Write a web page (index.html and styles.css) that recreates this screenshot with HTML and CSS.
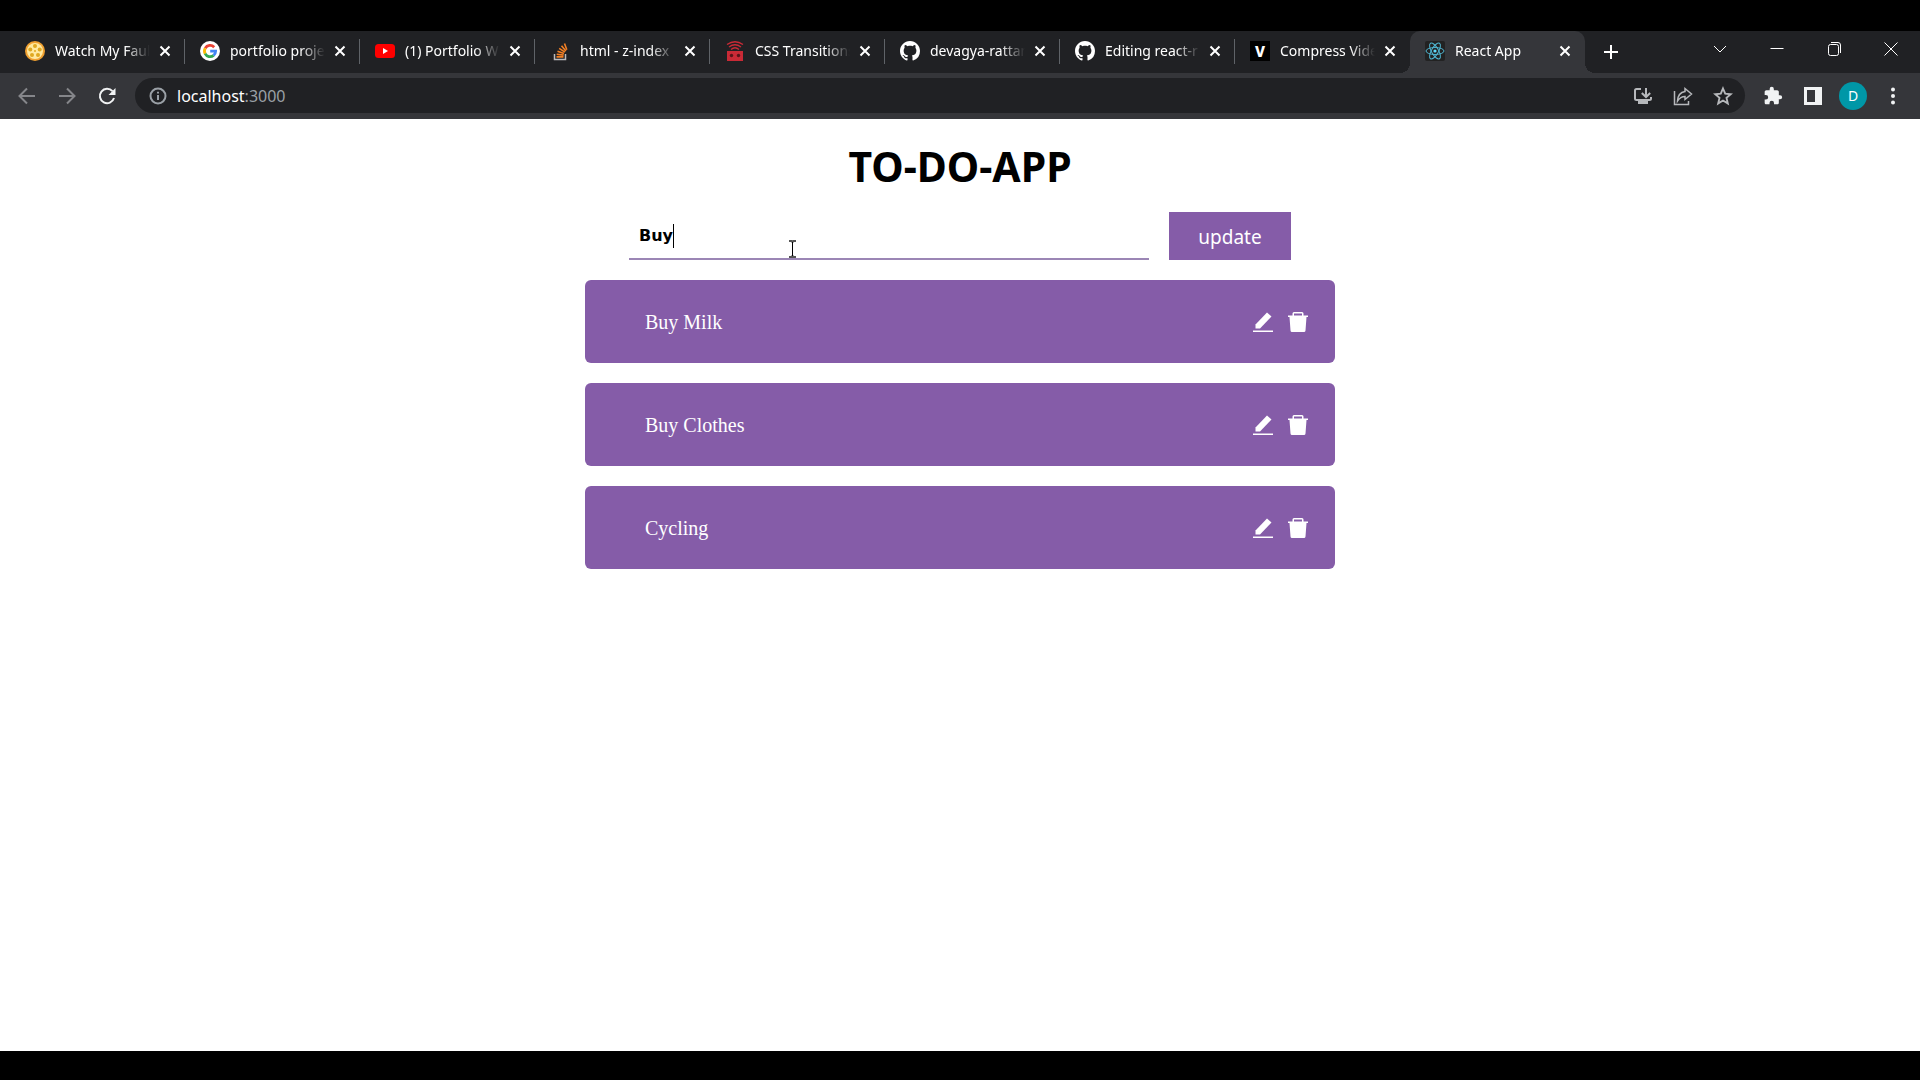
FILE: index.html
```html
<!DOCTYPE html>
<html lang="en">
<head>
<meta charset="utf-8">
<title>React App</title>
<link rel="stylesheet" href="styles.css">
</head>
<body>
<div class="screen">
  <header class="tab-strip">
    <div class="tabs">
      <div class="tab">
        <svg class="favicon" viewBox="0 0 20 20"><circle cx="10" cy="10" r="10" fill="#f0a030"/><circle cx="10" cy="10" r="8" fill="#ffe9a0"/><g fill="#e0a820"><circle cx="10" cy="5" r="2"/><circle cx="14.700" cy="8.500" r="2"/><circle cx="13" cy="14" r="2"/><circle cx="7" cy="14" r="2"/><circle cx="5.300" cy="8.500" r="2"/><circle cx="10" cy="10" r="1"/></g></svg>
        <span class="tab-title">Watch My Faul</span>
        <button class="tab-close" aria-label="Close tab"><svg viewBox="0 0 16 16"><path d="M3.500 3.500l9 9M12.500 3.500l-9 9"/></svg></button>
      </div>
      <div class="tab">
        <svg class="favicon" viewBox="0 0 20 20"><circle cx="10" cy="10" r="10" fill="#fff"/><g fill="none" stroke-width="2.800"><path d="M14.200 6.200A5.600 5.600 0 0 0 5.200 7.300" stroke="#ea4335"/><path d="M5.200 7.200a5.800 5.800 0 0 0 0 5.600" stroke="#fbbc05"/><path d="M5.100 12.600a5.600 5.600 0 0 0 8.500 1.800" stroke="#34a853"/><path d="M13.600 14.400a5.600 5.600 0 0 0 2-4.200H10.200" stroke="#4285f4"/></g></svg>
        <span class="tab-title">portfolio proje</span>
        <button class="tab-close" aria-label="Close tab"><svg viewBox="0 0 16 16"><path d="M3.500 3.500l9 9M12.500 3.500l-9 9"/></svg></button>
      </div>
      <div class="tab">
        <svg class="favicon" viewBox="0 0 20 20"><rect y="3" width="20" height="14" rx="3.500" fill="#f00"/><path d="M8 7l5 3-5 3z" fill="#fff"/></svg>
        <span class="tab-title">(1) Portfolio W</span>
        <button class="tab-close" aria-label="Close tab"><svg viewBox="0 0 16 16"><path d="M3.500 3.500l9 9M12.500 3.500l-9 9"/></svg></button>
      </div>
      <div class="tab">
        <svg class="favicon" viewBox="0 0 20 20" fill="none"><path d="M4.500 13v5.500h11V13" stroke="#bcbbbb" stroke-width="1.500"/><g stroke="#f48024" stroke-width="1.600"><path d="M6.500 15.900h7M6.700 13.200l6.900.9M7.500 10.200l6.500 2.400M9.200 7.300l5.700 3.900M11.500 4.700l4.400 5.400M14.500 2.500l2.300 6.200"/></g></svg>
        <span class="tab-title">html - z-index</span>
        <button class="tab-close" aria-label="Close tab"><svg viewBox="0 0 16 16"><path d="M3.500 3.500l9 9M12.500 3.500l-9 9"/></svg></button>
      </div>
      <div class="tab">
        <svg class="favicon" viewBox="0 0 20 20"><path d="M2 10h16v10H2z" fill="#c92a36"/><g fill="none" stroke="#c92a36" stroke-width="1.300"><path d="M2 3.500Q10-2 18 3.500M4 6Q10 1.500 16 6M6 8.500Q10 5 14 8.500"/></g><circle cx="6.500" cy="14.500" r="1.700" fill="#571419"/><circle cx="13.500" cy="14.500" r="1.700" fill="#571419"/></svg>
        <span class="tab-title">CSS Transitions</span>
        <button class="tab-close" aria-label="Close tab"><svg viewBox="0 0 16 16"><path d="M3.500 3.500l9 9M12.500 3.500l-9 9"/></svg></button>
      </div>
      <div class="tab">
        <svg class="favicon" viewBox="0 0 16 16"><path fill="#fff" d="M8 0C3.580 0 0 3.580 0 8c0 3.540 2.290 6.530 5.470 7.590.4.070.55-.17.55-.38 0-.19-.01-.82-.01-1.490-2.010.37-2.530-.49-2.690-.94-.09-.23-.48-.94-.82-1.130-.28-.15-.68-.52-.01-.53.63-.01 1.080.58 1.230.82.72 1.210 1.870.87 2.330.66.070-.52.28-.87.51-1.070-1.780-.2-3.640-.89-3.640-3.950 0-.87.31-1.590.82-2.150-.08-.2-.36-1.020.08-2.120 0 0 .67-.21 2.200.82.64-.18 1.320-.27 2-.27s1.360.09 2 .27c1.530-1.040 2.200-.82 2.200-.82.44 1.100.16 1.920.08 2.120.51.56.82 1.270.82 2.150 0 3.070-1.870 3.750-3.650 3.950.29.25.54.73.54 1.480 0 1.070-.01 1.930-.01 2.200 0 .21.15.46.55.38A8.010 8.010 0 0 0 16 8c0-4.420-3.580-8-8-8z"/></svg>
        <span class="tab-title">devagya-rattan</span>
        <button class="tab-close" aria-label="Close tab"><svg viewBox="0 0 16 16"><path d="M3.500 3.500l9 9M12.500 3.500l-9 9"/></svg></button>
      </div>
      <div class="tab">
        <svg class="favicon" viewBox="0 0 16 16"><path fill="#fff" d="M8 0C3.580 0 0 3.580 0 8c0 3.540 2.290 6.530 5.470 7.590.4.070.55-.17.55-.38 0-.19-.01-.82-.01-1.490-2.010.37-2.530-.49-2.690-.94-.09-.23-.48-.94-.82-1.130-.28-.15-.68-.52-.01-.53.63-.01 1.080.58 1.230.82.72 1.210 1.870.87 2.330.66.070-.52.28-.87.51-1.070-1.780-.2-3.640-.89-3.640-3.950 0-.87.31-1.590.82-2.150-.08-.2-.36-1.020.08-2.120 0 0 .67-.21 2.200.82.64-.18 1.320-.27 2-.27s1.360.09 2 .27c1.530-1.040 2.200-.82 2.200-.82.44 1.100.16 1.920.08 2.120.51.56.82 1.270.82 2.150 0 3.070-1.870 3.750-3.650 3.950.29.25.54.73.54 1.480 0 1.070-.01 1.930-.01 2.200 0 .21.15.46.55.38A8.010 8.010 0 0 0 16 8c0-4.420-3.580-8-8-8z"/></svg>
        <span class="tab-title">Editing react-r</span>
        <button class="tab-close" aria-label="Close tab"><svg viewBox="0 0 16 16"><path d="M3.500 3.500l9 9M12.500 3.500l-9 9"/></svg></button>
      </div>
      <div class="tab last">
        <span class="favicon letter-icon">V</span>
        <span class="tab-title">Compress Vide</span>
        <button class="tab-close" aria-label="Close tab"><svg viewBox="0 0 16 16"><path d="M3.500 3.500l9 9M12.500 3.500l-9 9"/></svg></button>
      </div>
      <div class="tab active">
        <svg class="favicon" viewBox="0 0 20 20"><rect width="20" height="20" rx="2" fill="#222"/><circle cx="10" cy="10" r="1.600" fill="#61dafb"/><g fill="none" stroke="#4fb4d0" stroke-width="1"><ellipse cx="10" cy="10" rx="9" ry="3.500"/><ellipse cx="10" cy="10" rx="9" ry="3.500" transform="rotate(60 10 10)"/><ellipse cx="10" cy="10" rx="9" ry="3.500" transform="rotate(120 10 10)"/></g></svg>
        <span class="tab-title">React App</span>
        <button class="tab-close" aria-label="Close tab"><svg viewBox="0 0 16 16"><path d="M3.500 3.500l9 9M12.500 3.500l-9 9"/></svg></button>
      </div>
    </div>
    <button class="new-tab" aria-label="New tab"><svg viewBox="0 0 16 16"><path d="M8 1v14M1 8h14"/></svg></button>
    <div class="window-controls">
      <button aria-label="Search tabs"><svg viewBox="0 0 14 14"><path d="M1 4l6 6 6-6"/></svg></button>
      <button aria-label="Minimize"><svg viewBox="0 0 14 14"><path d="M.5 6.500h13"/></svg></button>
      <button aria-label="Restore"><svg viewBox="0 0 14 14"><rect x="1.500" y="2.500" width="10" height="11" rx="2"/><path d="M4 .5h7a2.500 2.500 0 0 1 2.500 2.500v8"/></svg></button>
      <button aria-label="Close window"><svg viewBox="0 0 14 14"><path d="M.5.5l13 13M13.500.5l-13 13"/></svg></button>
    </div>
  </header>

  <nav class="toolbar">
    <div class="tool-group">
      <button class="tool muted" aria-label="Back"><svg viewBox="0 0 20 20"><path d="M18 10H2.500M10 2.500L2.500 10l7.500 7.500"/></svg></button>
      <button class="tool muted" aria-label="Forward"><svg viewBox="0 0 20 20"><path d="M2 10h15.500M10 2.500l7.500 7.500-7.500 7.500"/></svg></button>
      <button class="tool" aria-label="Reload"><svg viewBox="0 0 20 20"><path d="M15.500 5.200A7.200 7.200 0 1 0 17 12" stroke-width="2"/><path d="M18.500 2v7h-7z" fill="currentColor" stroke="none"/></svg></button>
    </div>
    <div class="address-bar">
      <svg class="site-info" viewBox="0 0 18 18"><circle cx="9" cy="9" r="7.500"/><path d="M9 8v5M9 4.700v1.800"/></svg>
      <span class="address">localhost<span class="port">:3000</span></span>
      <button class="tool soft" aria-label="Install app"><svg viewBox="0 0 20 20"><path d="M8 3H3.500Q2 3 2 4.500v8Q2 14 3.500 14h13q1.500 0 1.500-1.500V11M13 2v8.500M8.800 7L13 11l4.200-4"/><path d="M5 15h10v3H5z" fill="currentColor" stroke="none"/></svg></button>
      <button class="tool soft" aria-label="Share"><svg viewBox="0 0 20 20"><path d="M1.500 5v13.500h14V15M12 2.500l6.500 5.500-6.500 5.500V10.500Q7.500 10.500 4.500 15 5 6.500 12 5.500z" stroke-width="1.500"/></svg></button>
      <button class="tool soft" aria-label="Bookmark"><svg viewBox="0 0 20 20"><path d="M10 2.500l2.200 5.200 5.600.5-4.300 3.700 1.300 5.500-4.800-2.900-4.800 2.900 1.300-5.500-4.300-3.700 5.600-.5z" stroke-width="1.900"/></svg></button>
    </div>
    <div class="tool-group">
      <button class="tool" aria-label="Extensions"><svg viewBox="0 0 24 24"><path fill="currentColor" stroke="none" d="M20.500 11H19V7c0-1.100-.9-2-2-2h-4V3.500a2.500 2.500 0 0 0-5 0V5H4c-1.100 0-2 .9-2 2v3.800h1.500a2.700 2.700 0 0 1 0 5.400H2V20c0 1.100.9 2 2 2h3.800v-1.500a2.700 2.700 0 0 1 5.400 0V22H17c1.100 0 2-.9 2-2v-4h1.500a2.500 2.500 0 0 0 0-5z"/></svg></button>
      <button class="tool" aria-label="Side panel"><svg viewBox="0 0 20 20"><path fill="currentColor" stroke="none" fill-rule="evenodd" d="M1 1h18v18H1zM4 4v12h8V4z"/></svg></button>
      <button class="tool" aria-label="Profile"><span class="avatar">D</span></button>
      <button class="tool" aria-label="Menu"><svg viewBox="0 0 20 20"><g fill="currentColor" stroke="none"><circle cx="10" cy="3.500" r="2"/><circle cx="10" cy="10" r="2"/><circle cx="10" cy="16.500" r="2"/></g></svg></button>
    </div>
  </nav>

  <main class="app">
    <h1>TO-DO-APP</h1>
    <form class="todo-form">
      <div class="field">
        <input class="todo-input" type="text" value="Buy" aria-label="To-do">
        <span class="caret"></span>
        <svg class="pointer" viewBox="0 0 9 18"><path d="M1 1h2.500l1 1 1-1H8M1 17h2.500l1-1 1 1H8" stroke="#555" stroke-width="2"/><path d="M4.500 2v14"/></svg>
      </div>
      <button class="submit" type="button">update</button>
    </form>
    <ul class="todo-list">
      <li class="todo">
        <span class="todo-text">Buy Milk</span>
        <button class="action" aria-label="Edit"><svg viewBox="0 0 20 20"><path d="M0 18.500h20V20H0z"/><path d="M2.500 16.500v-4L14 .5 18.500 4.500 7 16.500z"/></svg></button>
        <button class="action" aria-label="Delete"><svg viewBox="0 0 20 20"><path fill-rule="evenodd" d="M6 0h8q1.500 0 1.500 1.500V3.500H20V5h-1.500L17.500 18.500Q17.400 20 16 20H4Q2.600 20 2.500 18.500L1.500 5H0V3.500h4.500v-2Q4.500 0 6 0zm0 1.500v2h8v-2z"/></svg></button>
      </li>
      <li class="todo">
        <span class="todo-text">Buy Clothes</span>
        <button class="action" aria-label="Edit"><svg viewBox="0 0 20 20"><path d="M0 18.500h20V20H0z"/><path d="M2.500 16.500v-4L14 .5 18.500 4.500 7 16.500z"/></svg></button>
        <button class="action" aria-label="Delete"><svg viewBox="0 0 20 20"><path fill-rule="evenodd" d="M6 0h8q1.500 0 1.500 1.500V3.500H20V5h-1.500L17.500 18.500Q17.400 20 16 20H4Q2.600 20 2.500 18.500L1.500 5H0V3.500h4.500v-2Q4.500 0 6 0zm0 1.500v2h8v-2z"/></svg></button>
      </li>
      <li class="todo">
        <span class="todo-text">Cycling</span>
        <button class="action" aria-label="Edit"><svg viewBox="0 0 20 20"><path d="M0 18.500h20V20H0z"/><path d="M2.500 16.500v-4L14 .5 18.500 4.500 7 16.500z"/></svg></button>
        <button class="action" aria-label="Delete"><svg viewBox="0 0 20 20"><path fill-rule="evenodd" d="M6 0h8q1.500 0 1.500 1.500V3.500H20V5h-1.500L17.500 18.500Q17.400 20 16 20H4Q2.600 20 2.500 18.500L1.500 5H0V3.500h4.500v-2Q4.500 0 6 0zm0 1.500v2h8v-2z"/></svg></button>
      </li>
    </ul>
  </main>
</div>
</body>
</html>
```
FILE: styles.css
```css
* { box-sizing: border-box; }

body {
  margin: 0;
  background: #000;
  font-family: "Noto Sans", sans-serif;
}

button {
  margin: 0;
  padding: 0;
  border: 0;
  background: none;
  color: inherit;
  font: inherit;
}

svg { display: block; flex: none; }

.screen {
  display: flex;
  flex-direction: column;
  min-height: 100vh;
  padding: 31px 0 29px;
}

/* Tab strip */
.tab-strip {
  display: flex;
  height: 42px;
  padding-left: 10px;
  background: #202124;
  color: #fff;
}

.tabs {
  display: flex;
  flex: 0 1 1575px;
  min-width: 0;
}

.tab {
  position: relative;
  display: flex;
  align-items: center;
  flex: 1 1 0;
  min-width: 0;
  padding: 0 12px 2px 15px;
}

.tab::after {
  content: "";
  position: absolute;
  top: 8px;
  right: 0;
  width: 1px;
  height: 25px;
  background: #5f6368;
}

.tab.last::after { display: none; }

.tab.active {
  background: #35363a;
  border-radius: 10px 10px 0 0;
}

.tab.active::before,
.tab.active::after {
  content: "";
  position: absolute;
  top: auto;
  bottom: 0;
  width: 10px;
  height: 10px;
}

.tab.active::before {
  left: -10px;
  background: radial-gradient(circle at 0 0, transparent 10px, #35363a 10px);
}

.tab.active::after {
  right: -10px;
  background: radial-gradient(circle at 100% 0, transparent 10px, #35363a 10px);
}

.favicon {
  flex: none;
  width: 20px;
  height: 20px;
}

.letter-icon {
  background: #000;
  font-size: 15px;
  font-weight: 800;
  line-height: 20px;
  text-align: center;
}

.tab-title {
  flex: 1;
  min-width: 0;
  margin: 0 7px 0 10px;
  overflow: hidden;
  font-size: 14px;
  line-height: 20px;
  white-space: nowrap;
  -webkit-mask-image: linear-gradient(to right, #000 74%, transparent);
  mask-image: linear-gradient(to right, #000 74%, transparent);
}

.tab-close svg {
  width: 16px;
  height: 16px;
  stroke: #fff;
  stroke-width: 2;
}

.new-tab {
  align-self: center;
  margin-left: 18px;
}

.new-tab svg {
  width: 16px;
  height: 16px;
  stroke: #fff;
  stroke-width: 2;
}

.window-controls {
  display: flex;
  height: 36px;
  margin-left: auto;
  padding-right: 1px;
}

.window-controls button {
  display: grid;
  place-items: center;
  width: 57px;
}

.window-controls svg {
  width: 14px;
  height: 14px;
  fill: none;
  stroke: #fff;
  stroke-width: 1;
}

/* Toolbar */
.toolbar {
  display: flex;
  align-items: center;
  gap: 8px;
  height: 46px;
  padding: 0 7px 1px;
  background: #35363a;
  color: #f1f3f4;
}

.tool-group { display: flex; }

.tool {
  display: grid;
  place-items: center;
  width: 40px;
  height: 35px;
}

.tool svg {
  width: 20px;
  height: 20px;
  fill: none;
  stroke: currentColor;
  stroke-width: 2;
}

.muted { color: #85868a; }
.soft { color: #b6b8bb; }

.address-bar {
  display: flex;
  align-items: center;
  flex: 1;
  height: 35px;
  padding: 0 2px 0 14px;
  border-radius: 18px;
  background: #202124;
}

.site-info {
  width: 18px;
  height: 18px;
  fill: none;
  stroke: #9aa0a6;
  stroke-width: 2;
}

.address {
  flex: 1;
  margin-left: 10px;
  color: #fff;
  font-size: 16px;
  line-height: 24px;
}

.port { color: #9aa0a6; }

.avatar {
  width: 28px;
  height: 28px;
  border-radius: 50%;
  background: #0097a7;
  color: #fff;
  font-size: 14px;
  line-height: 28px;
  text-align: center;
}

/* To-do app */
.app {
  flex: 1;
  padding: 20px;
  background: #fff;
}

h1 {
  margin: 0 0 18px;
  color: #000;
  font-size: 41px;
  line-height: 55px;
  text-align: center;
}

.todo-form {
  display: flex;
  gap: 20px;
  max-width: 662px;
  margin: 0 auto 20px;
}

.field {
  position: relative;
  flex: 1;
}

.todo-input {
  display: block;
  width: 100%;
  height: 48px;
  padding: 0 10px;
  border: 0;
  border-bottom: 2px solid #9b86b5;
  outline: 0;
  background: transparent;
  color: #000;
  font-family: "DejaVu Sans", sans-serif;
  font-size: 16px;
  font-weight: 700;
}

.caret {
  position: absolute;
  top: 12px;
  left: 44px;
  width: 1px;
  height: 24px;
  background: #000;
}

.pointer {
  position: absolute;
  top: 28px;
  left: 159px;
  width: 9px;
  height: 18px;
  fill: none;
  stroke: #000;
  stroke-width: 1;
}

.submit {
  width: 122px;
  height: 48px;
  padding-top: 2px;
  background: #855ca8;
  color: #fff;
  font-size: 19px;
}

.todo-list {
  display: grid;
  gap: 20px;
  max-width: 750px;
  margin: 0 auto;
  padding: 0;
  list-style: none;
}

.todo {
  display: flex;
  align-items: center;
  gap: 15px;
  min-height: 83px;
  padding: 0 27px 0 60px;
  border-radius: 6px;
  background: #855ca8;
  color: #fff;
}

.todo-text {
  flex: 1;
  font-family: "Liberation Serif", serif;
  font-size: 20px;
  line-height: 24px;
}

.action svg {
  width: 20px;
  height: 20px;
  fill: #fff;
}
```
